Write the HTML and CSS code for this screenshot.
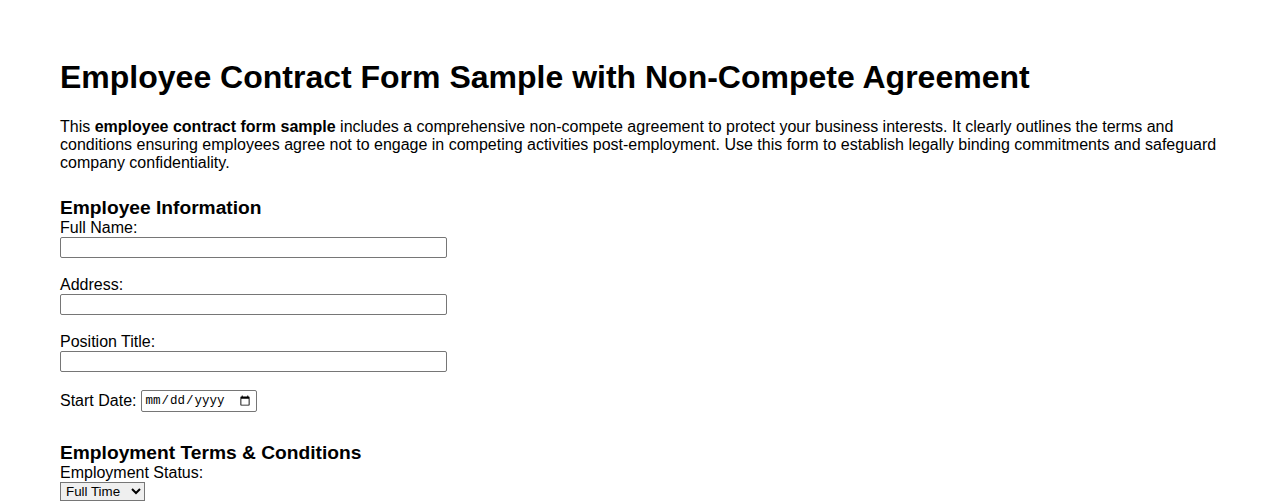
FILE: index.html
```html
<!DOCTYPE html>
<html lang="en">
<head>
<meta charset="utf-8">
<title>Employee Contract Form Sample with Non-Compete Agreement</title>
<link rel="stylesheet" href="styles.css">
</head>
<body>
<div class="page">
  <h1 class="title">Employee Contract Form Sample with Non-Compete Agreement</h1>
  <p class="intro">This <strong>employee contract form sample</strong> includes a comprehensive non-compete agreement to protect your business interests. It clearly outlines the terms and conditions ensuring employees agree not to engage in competing activities post-employment. Use this form to establish legally binding commitments and safeguard company confidentiality.</p>
  <form class="form">
    <section class="section">
      <h3 class="section-title">Employee Information</h3>
      <div class="field">
        <label class="label" for="fullName">Full Name:</label>
        <input class="text-input" type="text" id="fullName" name="fullName">
      </div>
      <div class="field">
        <label class="label" for="address">Address:</label>
        <input class="text-input" type="text" id="address" name="address">
      </div>
      <div class="field">
        <label class="label" for="position">Position Title:</label>
        <input class="text-input" type="text" id="position" name="position">
      </div>
      <div class="field-inline">
        <label class="label" for="startDate">Start Date:</label>
        <input class="date-input" type="date" id="startDate" name="startDate">
      </div>
    </section>
    <section class="section section-second">
      <h3 class="section-title">Employment Terms &amp; Conditions</h3>
      <div class="field">
        <label class="label" for="status">Employment Status:</label>
        <select class="select" id="status" name="status">
          <option>Full Time</option>
          <option>Part Time</option>
          <option>Contract</option>
        </select>
      </div>
    </section>
  </form>
</div>
</body>
</html>
```
FILE: styles.css
```css
html, body {
  margin: 0;
  padding: 0;
  background: #ffffff;
}

body {
  font-family: "Liberation Sans", Arial, sans-serif;
  font-size: 16px;
  color: #000000;
}

.page {
  padding: 38px 60px 0 60px;
}

.title {
  font-size: 32px;
  font-weight: bold;
  margin: 21.44px 0;
}

.intro {
  margin: 0 0 16px 0;
  line-height: normal;
}

.form {
  margin: 0;
}

.section {
  margin-top: 25.5px;
}

.section-second {
  margin-top: 30px;
}

.section-title {
  font-size: 19.2px;
  font-weight: bold;
  margin: 0;
}

.field {
  display: flex;
  flex-direction: column;
  align-items: flex-start;
  margin-bottom: 17.8px;
}

.label {
  display: block;
}

.text-input {
  width: 387px;
  box-sizing: border-box;
  height: 21px;
  margin: 0;
  font-family: "Liberation Sans", Arial, sans-serif;
  font-size: 13.33px;
  border: 1px solid #767676;
  border-radius: 2px;
  padding: 1px 2px;
}

.field-inline {
  display: flex;
  align-items: center;
  gap: 5px;
  margin-top: 0;
}

.date-input {
  box-sizing: border-box;
  width: 116px;
  height: 22px;
  margin: 0;
  font-family: "Liberation Mono", monospace;
  font-size: 12.5px;
  border: 1px solid #767676;
  border-radius: 2px;
  padding: 1px 3px 1px 2px;
}

.select {
  margin: 0;
  height: 19px;
  width: 85px;
  box-sizing: border-box;
  font-family: "Liberation Sans", Arial, sans-serif;
  font-size: 13.33px;
  border: 1px solid #767676;
  border-radius: 0;
  padding: 0 0 0 1px;
}
```
